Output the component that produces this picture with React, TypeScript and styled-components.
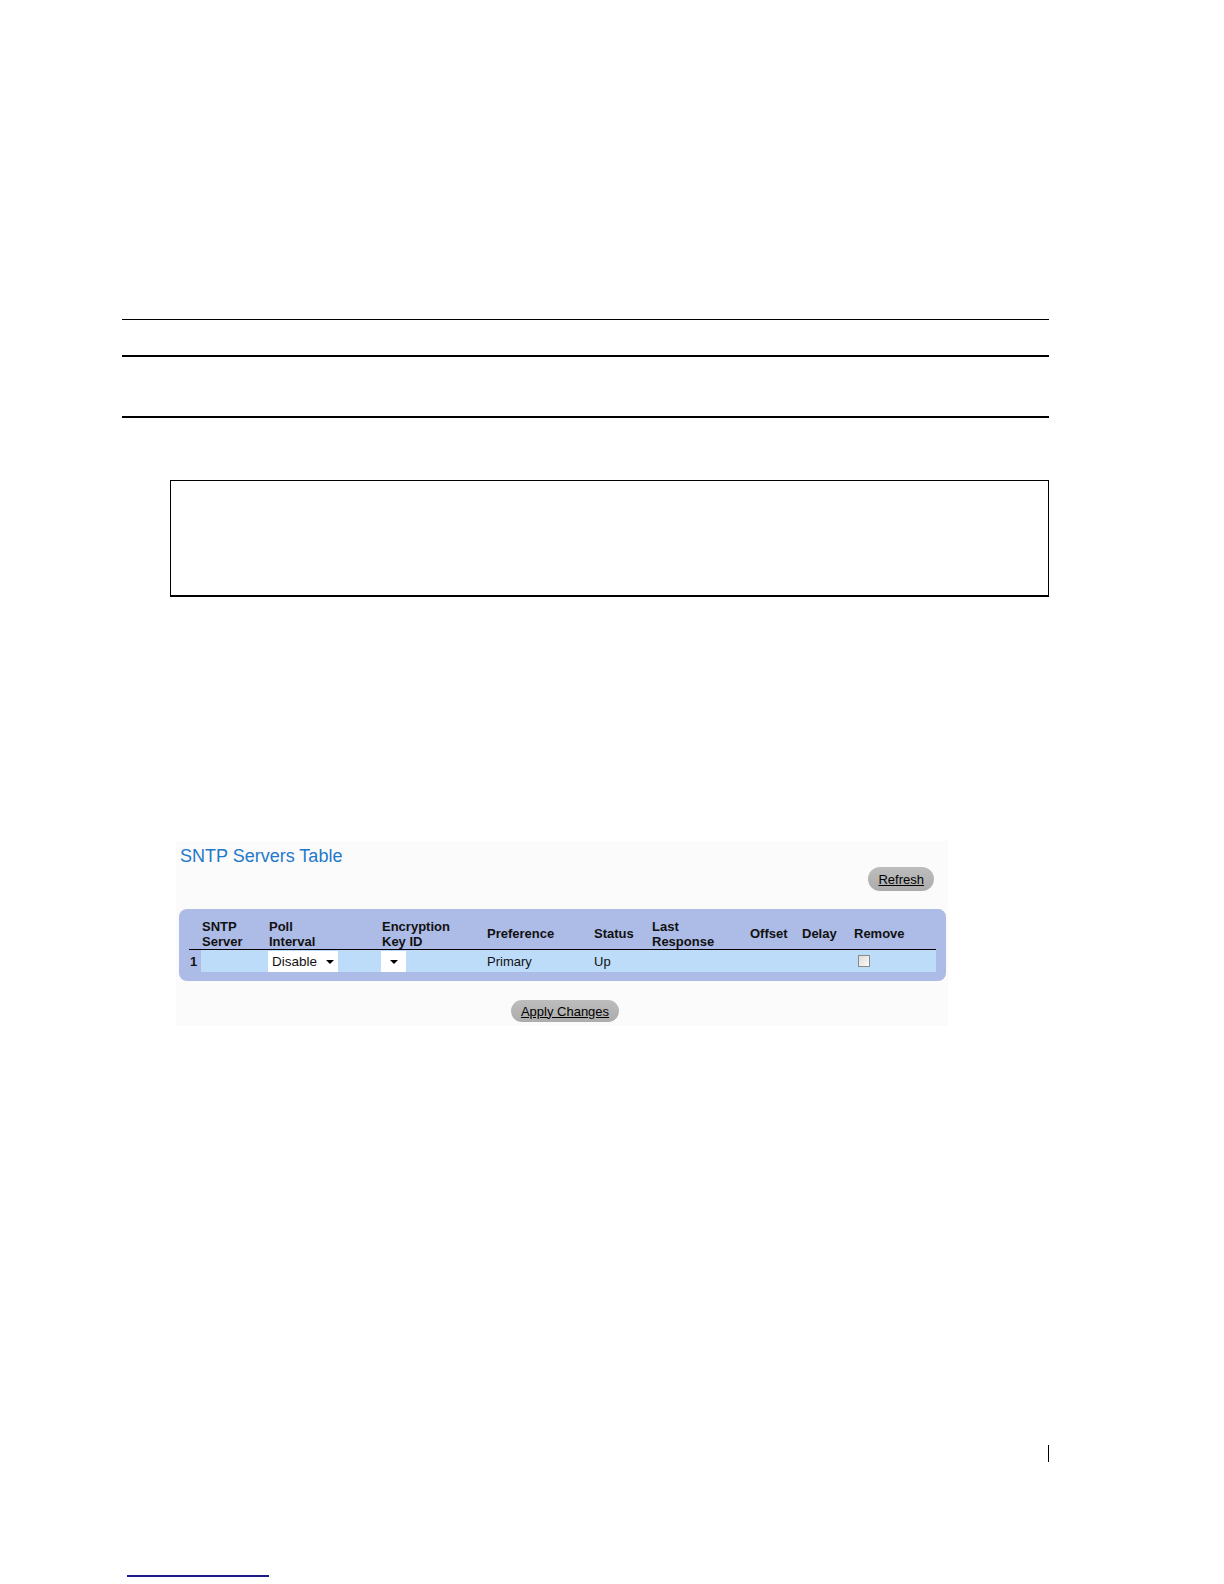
import React from "react";
import styled, { createGlobalStyle } from "styled-components";

const Global = createGlobalStyle`
  html, body { margin: 0; padding: 0; background: #ffffff; }
  body { font-family: "Liberation Sans", Arial, sans-serif; color: #000; }
`;

const Page = styled.div`
  width: 927px;
  padding: 319px 0 0 122px;
  display: flex;
  flex-direction: column;
`;

const Rule = styled.div<{ $thick?: boolean; $gap: number }>`
  height: ${(p) => (p.$thick ? 2 : 1)}px;
  background: #000;
  margin-top: ${(p) => p.$gap}px;
`;

const NoteBox = styled.div`
  margin: 62px 0 0 48px;
  height: 114px;
  border: 1px solid #000;
  border-bottom-width: 2px;
`;

const Panel = styled.div`
  margin: 244px 0 0 54px;
  width: 772px;
  box-sizing: border-box;
  padding: 5px 2px 4px 3px;
  background: #fbfbfc;
  display: flex;
  flex-direction: column;
`;

const Title = styled.div`
  font-size: 18px;
  line-height: 20px;
  color: #1f78c9;
  margin-left: 1px;
`;

const ButtonRow = styled.div<{ $center?: boolean; $gap: number }>`
  display: flex;
  justify-content: ${(p) => (p.$center ? "center" : "flex-end")};
  padding: ${(p) => (p.$center ? "0 0 0 5px" : "0 12px 0 0")};
  margin-top: ${(p) => p.$gap}px;
`;

const PillButton = styled.span<{ $h: number }>`
  display: inline-flex;
  align-items: center;
  justify-content: center;
  height: ${(p) => p.$h}px;
  padding: 0 10px;
  border-radius: ${(p) => p.$h / 2}px;
  background: linear-gradient(#bdbdbd, #acacac);
  font-size: 13px;
  color: #000;
  text-decoration: underline;
  white-space: nowrap;
`;

const TableBox = styled.div`
  margin-top: 18px;
  width: 767px;
  box-sizing: border-box;
  padding: 11px 10px 9px 10px;
  background: #adbbe7;
  border-radius: 8px;
`;

const Grid = styled.div`
  display: grid;
  grid-template-columns: 12px 67px 113px 105px 107px 58px 98px 52px 52px 83px;
`;

const Head = styled.div`
  font-size: 13px;
  font-weight: bold;
  line-height: 14.5px;
  height: 29px;
  display: flex;
  align-items: center;
  padding-left: 1px;
  border-bottom: 1px solid #000;
  color: #111;
`;

const Cell = styled.div<{ $plain?: boolean }>`
  height: 22px;
  display: flex;
  align-items: center;
  padding-left: 1px;
  font-size: 13px;
  background: ${(p) => (p.$plain ? "transparent" : "#bddcf9")};
  font-weight: ${(p) => (p.$plain ? "bold" : "normal")};
  color: #111;
`;

const Select = styled.span<{ $w: number }>`
  display: inline-flex;
  align-items: center;
  justify-content: space-between;
  box-sizing: border-box;
  width: ${(p) => p.$w}px;
  height: 21px;
  margin-top: 1px;
  margin-left: -1px;
  padding: 0 4px 0 4px;
  background: #fff;
  font-size: 13.5px;
`;

const Arrow = styled.span`
  width: 0;
  height: 0;
  margin-left: auto;
  border-left: 4px solid transparent;
  border-right: 4px solid transparent;
  border-top: 4px solid #000;
`;

const Check = styled.span`
  display: inline-block;
  box-sizing: border-box;
  width: 12px;
  height: 12px;
  margin-left: 4px;
  border: 1px solid #8a8a8a;
  background: linear-gradient(135deg, #dcdcdc, #fbfbfb);
`;

const MarkRow = styled.div`
  display: flex;
  justify-content: flex-end;
  margin-top: 419px;
`;

const Mark = styled.div`
  width: 1px;
  height: 17px;
  background: #000;
`;

const FootLine = styled.div`
  width: 142px;
  height: 2px;
  margin: 113px 0 0 5px;
  background: #1c1c86;
`;

const headers: React.ReactNode[] = [
  "",
  <>SNTP<br />Server</>,
  <>Poll<br />Interval</>,
  <>Encryption<br />Key ID</>,
  "Preference",
  "Status",
  <>Last<br />Response</>,
  "Offset",
  "Delay",
  "Remove",
];

export default function App() {
  return (
    <>
      <Global />
      <Page>
        <Rule $gap={0} />
        <Rule $thick $gap={35} />
        <Rule $thick $gap={59} />
        <NoteBox />
        <Panel>
          <Title>SNTP Servers Table</Title>
          <ButtonRow $gap={1}>
            <PillButton $h={24}>Refresh</PillButton>
          </ButtonRow>
          <TableBox>
            <Grid>
              {headers.map((h, i) => (
                <Head key={i}>{h}</Head>
              ))}
              <Cell $plain>1</Cell>
              <Cell />
              <Cell>
                <Select $w={70}>
                  Disable
                  <Arrow />
                </Select>
              </Cell>
              <Cell>
                <Select $w={25}>
                  <Arrow style={{ marginRight: 4 }} />
                </Select>
              </Cell>
              <Cell>Primary</Cell>
              <Cell>Up</Cell>
              <Cell />
              <Cell />
              <Cell />
              <Cell>
                <Check />
              </Cell>
            </Grid>
          </TableBox>
          <ButtonRow $center $gap={19}>
            <PillButton $h={22}>Apply Changes</PillButton>
          </ButtonRow>
        </Panel>
        <MarkRow>
          <Mark />
        </MarkRow>
        <FootLine />
      </Page>
    </>
  );
}
